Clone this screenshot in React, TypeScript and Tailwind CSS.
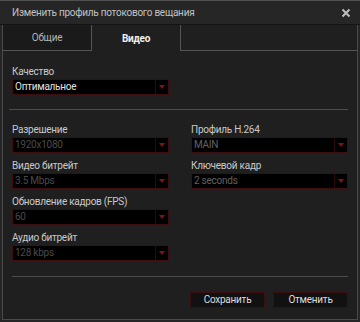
import React from 'react';

type SelectProps = { value: string; tone?: 'on' | 'dim' | 'off' };

const Select: React.FC<SelectProps> = ({ value, tone = 'off' }) => {
  const color =
    tone === 'on' ? 'text-[#e2e2e2]' : tone === 'dim' ? 'text-[#626262]' : 'text-[#4a4a4a]';
  return (
    <div className="flex h-[16px] items-stretch border border-[#3d0e10] bg-black">
      <span className={`flex-1 pl-[2px] text-[10px] leading-[14px] tracking-[-0.25px] ${color}`}>{value}</span>
      <span className="flex w-[13px] items-center justify-center border-l border-[#2a0a0b]">
        <svg width="6" height="4" viewBox="0 0 6 4">
          <path d="M0 0h6L3 4z" fill="#7c1418" />
        </svg>
      </span>
    </div>
  );
};

const Field: React.FC<{ label: string } & SelectProps> = ({ label, ...rest }) => (
  <div className="flex flex-col">
    <span className="h-[14px] text-[10px] leading-[14px] tracking-[-0.25px] text-[#c9c9c9]">{label}</span>
    <Select {...rest} />
  </div>
);

const Button: React.FC<{ label: string }> = ({ label }) => (
  <button className="h-[16px] w-[75px] border border-[#3d0e10] bg-[#111111] text-[10px] leading-[14px] tracking-[-0.25px] text-[#dedede]">
    {label}
  </button>
);

export default function App() {
  return (
    <div className="flex h-[322px] w-[360px] flex-col bg-[#262626] font-['Roboto',sans-serif]">
      {/* title bar */}
      <div className="flex h-[24px] items-center justify-between border-t border-[#505050] bg-[#262626] pl-[12px] pr-[9px]">
        <span className="text-[10px] tracking-[-0.25px] text-[#c2c2c2]">Изменить профиль потокового вещания</span>
        <svg width="10" height="10" viewBox="0 0 10 10">
          <path d="M1.5 1.5l7 7M8.5 1.5l-7 7" stroke="#bdbdbd" strokeWidth="2" />
        </svg>
      </div>
      <div className="h-px bg-[#141414]" />

      <div className="mx-[2px] mb-[2px] flex flex-1 flex-col border-x border-b border-[#4a4a4a] bg-[#1f1f1f]">
        {/* tabs */}
        <div className="flex h-[26px]">
          <div className="flex w-[89px] items-center justify-center border-r border-b border-[#555555] bg-[#1a1a1a] text-[10px] tracking-[-0.25px] text-[#b5b5b5]">
            Общие
          </div>
          <div className="flex w-[89px] items-center justify-center border-r border-[#555555] text-[10px] font-bold tracking-[-0.25px] text-[#f0f0f0]">
            Видео
          </div>
          <div className="flex-1 border-b border-[#555555]" />
        </div>

        <div className="flex flex-1 flex-col px-[9px] pt-[14px]">
          <div className="w-[157px]">
            <Field label="Качество" value="Оптимальное" tone="on" />
          </div>

          <div className="mt-[14px] ml-[-3px] h-px bg-[#4d4d4d]" />

          <div className="mt-[13px] grid grid-cols-2 gap-x-[22px] gap-y-[6px]">
            <Field label="Разрешение" value="1920x1080" />
            <Field label="Профиль H.264" value="MAIN" tone="dim" />
            <Field label="Видео битрейт" value="3.5 Mbps" />
            <Field label="Ключевой кадр" value="2 seconds" tone="dim" />
            <Field label="Обновление кадров (FPS)" value="60" />
            <div />
            <Field label="Аудио битрейт" value="128 kbps" />
          </div>

          <div className="mt-[15px] h-px bg-[#4d4d4d]" />

          <div className="mt-[15px] flex justify-end gap-[8px]">
            <Button label="Сохранить" />
            <Button label="Отменить" />
          </div>
        </div>
      </div>
    </div>
  );
}
